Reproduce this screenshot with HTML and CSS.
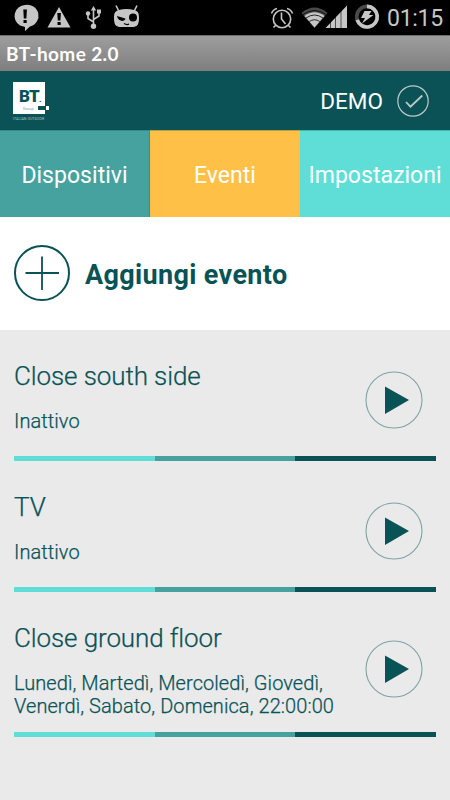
FILE: index.html
```
<!DOCTYPE html>
<html lang="it">
<head>
    <meta charset="UTF-8">
    <meta name="viewport" content="width=device-width, initial-scale=1.0">
    <title>BT-home 2.0</title>
    <link rel="stylesheet" href="styles.css">
</head>
<body>
    <div class="statusbar">
        <svg class="status-icons" width="150" height="35" viewBox="0 0 150 35">
            <path d="M25 5a11 11 0 0 0-5 20.500l5 1.500v4l5-4.500A11 11 0 0 0 25 5z" fill="#c6c6c6"/>
            <path d="M23.300 9.500h3.600l-.5 9h-2.600zM23.500 20h3.200v3h-3.200z" fill="#000"/>
            <path d="M59 7l11.500 20.500h-23z" fill="#c6c6c6"/>
            <path d="M57.300 13h3.600l-.5 7.500h-2.600zM57.500 22h3.200v3h-3.200z" fill="#000"/>
            <g fill="none" stroke="#c6c6c6" stroke-width="1.600">
                <path d="M93.500 9v16M93.500 22l-5.500-3.500V14M93.500 19.500l5.500-3.500v-4"/>
            </g>
            <path d="M93.500 6l2.700 4.500h-5.400zM97 9.500h4v4h-4z" fill="#c6c6c6"/>
            <circle cx="88" cy="13.500" r="2.200" fill="#c6c6c6"/>
            <circle cx="93.500" cy="26.300" r="2.700" fill="#c6c6c6"/>
            <path d="M116 5.500l3 6M137 5.500l-3 6" stroke="#c6c6c6" stroke-width="1.600"/>
            <path d="M119 10q7.500-2 15 0c4 1 5 3 5 8 0 7-2 9-7 9h-11c-5 0-7-2-7-9 0-5 1-7 5-8z" fill="#c6c6c6"/>
            <path d="M117 16l8.500 2.500c-1 4-7.500 3-8.500-2.500z" fill="#000"/>
            <circle cx="133" cy="17.500" r="4" fill="#000"/>
            <path d="M124 23.500q3 1.800 5 .5" fill="none" stroke="#000" stroke-width="1.200"/>
        </svg>
        <svg class="status-icons" width="112" height="35" viewBox="268 0 112 35">
            <g fill="none" stroke="#c6c6c6" stroke-width="1.600">
                <circle cx="282" cy="19" r="8.700"/>
                <path d="M281.500 12.500V19l4 5M275.500 25.500l-2 2M288.500 25.500l2 2M271.500 13.500q1.500-4 5.500-5M292.500 13.500q-1.500-4-5.500-5"/>
            </g>
            <path d="M301.500 13q13-11 26 0L314.500 28z" fill="#4a4a4a"/>
            <path d="M304.500 16q10-7.500 20 0l-10 11.500z" fill="#c6c6c6"/>
            <path d="M303 14.500q11.500-8 23 0M306 18q8.500-6 17 0M309.300 21.500q5.200-3.500 10.400 0" fill="none" stroke="#000" stroke-width=".8"/>
            <path d="M325.500 28L347 5.500V28z" fill="#c6c6c6"/>
            <path d="M330.500 20v8M335.500 16v12M341 10v18" stroke="#000" stroke-width=".6"/>
            <circle cx="367" cy="16.700" r="10.300" fill="none" stroke="#4a4a4a" stroke-width="3.600"/>
            <path d="M367 6.400a10.300 10.300 0 1 1-9.800 13.500" fill="none" stroke="#c6c6c6" stroke-width="3.600"/>
            <path d="M364.500 11h7l-2.500 4h4.500L362 23.500l3-5.500h-4z" fill="#c6c6c6"/>
        </svg>
        <span class="clock">01:15</span>
    </div>
    <div class="titlebar"><span class="app-title">BT-home 2.0</span></div>

    <header class="header">
        <div class="logo">
            <div class="logo-box">
                <span class="logo-name">BT<small>.</small></span>
                <span class="logo-group">Group</span>
                <span class="logo-flag"></span>
            </div>
            <span class="logo-tagline">ITALIAN OUTDOOR</span>
        </div>
        <div class="mode">
            <span class="mode-label">DEMO</span>
            <svg width="32" height="32" viewBox="0 0 32 32" fill="none" stroke="#bccaca">
                <circle cx="16" cy="16" r="15.200" stroke-width="1.200"/>
                <path d="M9 17l4.500 4.700L25.300 10.500" stroke-width="1.800"/>
            </svg>
        </div>
    </header>

    <nav class="tabs">
        <div class="tab devices"><span>Dispositivi</span></div>
        <div class="tab events"><span>Eventi</span></div>
        <div class="tab settings"><span>Impostazioni</span></div>
    </nav>

    <div class="add-event">
        <svg width="56" height="56" viewBox="0 0 56 56" fill="none" stroke="#095256">
            <circle cx="28" cy="28" r="27" stroke-width="2"/>
            <path d="M28 11.500v33.500M11.500 28H45" stroke-width="1.800"/>
        </svg>
        <span class="add-label">Aggiungi evento</span>
    </div>

    <main class="events-list">
        <div class="event">
            <div class="event-body">
                <div class="event-text">
                    <div class="event-name">Close south side</div>
                    <div class="event-info">Inattivo</div>
                </div>
                <svg class="play" width="58" height="58" viewBox="0 0 58 58">
                    <circle cx="29" cy="29" r="28" fill="none" stroke="#7fa3a5" stroke-width="1.100"/>
                    <path d="M20 15.500L44 29 20 43z" fill="#095256"/>
                </svg>
            </div>
            <div class="divider"></div>
        </div>
        <div class="event">
            <div class="event-body">
                <div class="event-text">
                    <div class="event-name">TV</div>
                    <div class="event-info">Inattivo</div>
                </div>
                <svg class="play" width="58" height="58" viewBox="0 0 58 58">
                    <circle cx="29" cy="29" r="28" fill="none" stroke="#7fa3a5" stroke-width="1.100"/>
                    <path d="M20 15.500L44 29 20 43z" fill="#095256"/>
                </svg>
            </div>
            <div class="divider"></div>
        </div>
        <div class="event tall">
            <div class="event-body">
                <div class="event-text">
                    <div class="event-name">Close ground floor</div>
                    <div class="event-info">Lunedì, Martedì, Mercoledì, Giovedì,<br>Venerdì, Sabato, Domenica, 22:00:00</div>
                </div>
                <svg class="play" width="58" height="58" viewBox="0 0 58 58">
                    <circle cx="29" cy="29" r="28" fill="none" stroke="#7fa3a5" stroke-width="1.100"/>
                    <path d="M20 15.500L44 29 20 43z" fill="#095256"/>
                </svg>
            </div>
            <div class="divider"></div>
        </div>
    </main>
</body>
</html>
```
FILE: styles.css
```
* {
    box-sizing: border-box;
}
body {
    margin: 0;
    height: 800px;
    display: flex;
    flex-direction: column;
    font-family: Roboto, "Liberation Sans", sans-serif;
    font-variant-ligatures: none;
    background-color: #eaeaea;
    color: #095256;
    overflow: hidden;
    white-space: nowrap;
}
svg {
    display: block;
    flex: none;
}
.statusbar {
    height: 35px;
    flex: none;
    display: flex;
    background-color: #000;
}
.status-icons:nth-child(2) {
    margin-left: 118px;
}
.clock {
    margin-left: 7px;
    color: #c6c6c6;
    font-size: 23px;
    line-height: 38px;
    letter-spacing: -0.3px;
}
.titlebar {
    height: 36px;
    flex: none;
    padding-left: 6px;
    background: linear-gradient(#9e9e9e, #7e7e7e);
    border-top: 1px solid #6b6b6b;
}
.app-title {
    color: #fff;
    font-family: Lato, sans-serif;
    font-size: 19px;
    font-weight: 700;
    line-height: 36px;
    letter-spacing: 0.4px;
}
.header {
    height: 59px;
    flex: none;
    display: flex;
    justify-content: space-between;
    padding: 11px 21px 0 13px;
    background-color: #0b5256;
}
.logo {
    width: 36px;
}
.logo-box {
    width: 32px;
    height: 32px;
    padding: 5px 0 0 6px;
    display: flex;
    flex-wrap: wrap;
    align-content: flex-start;
    background-color: #fff;
}
.logo-name {
    width: 26px;
    height: 19px;
    font-size: 17px;
    font-weight: 900;
    line-height: 18px;
    letter-spacing: -0.8px;
}
.logo-name small {
    font-size: 8px;
}
.logo-group {
    width: 19px;
    padding-left: 4px;
    font-size: 4px;
    line-height: 5px;
    color: #7fa3a5;
}
.logo-flag {
    width: 11px;
    height: 4px;
    margin: 0 -6px 0 0;
    background-color: #095256;
    border-right: 3px solid #fff;
}
.logo-tagline {
    display: block;
    margin-top: 3px;
    color: #a9c1c2;
    font-size: 3.700px;
    line-height: 4px;
}
.mode {
    display: flex;
    gap: 14px;
    padding-top: 3px;
}
.mode-label {
    color: #fff;
    font-size: 22.500px;
    line-height: 33px;
}
.tabs {
    height: 87px;
    flex: none;
    display: grid;
    grid-template-columns: repeat(3, 150px);
}
.tab {
    color: #fff;
    font-size: 23px;
    line-height: 89px;
    text-align: center;
    letter-spacing: 0.03px;
    border-top: 1px solid rgba(9, 82, 86, 0.3);
}
.devices {
    background-color: #46a29f;
    border-right: 1px solid #209a93;
}
.events {
    background-color: #ffc047;
}
.settings {
    background-color: #5eded6;
}
.add-event {
    height: 113px;
    flex: none;
    display: flex;
    align-items: center;
    gap: 15px;
    padding-left: 14px;
    background-color: #fff;
}
.add-event svg {
    margin-top: -1px;
}
.add-label {
    padding-top: 2px;
    font-size: 27px;
    font-weight: 700;
    letter-spacing: 0.35px;
}
.events-list {
    padding: 0 14px;
}
.event {
    height: 131px;
    display: flex;
    flex-direction: column;
}
.event.tall {
    height: 145px;
}
.event-body {
    flex: 1;
    display: flex;
    justify-content: space-between;
    padding-right: 13px;
}
.event-name {
    margin-top: 30px;
    font-size: 26px;
    font-weight: 300;
    line-height: 33px;
    letter-spacing: -0.1px;
    -webkit-text-stroke: 0.25px #095256;
}
.event-info {
    margin-top: 17px;
    font-size: 20px;
    font-weight: 300;
    line-height: 23px;
    letter-spacing: 0.07px;
    -webkit-text-stroke: 0.25px #095256;
}
.play {
    margin-top: 41px;
}
.tall .play {
    margin-top: 48px;
}
.divider {
    height: 5px;
    background: linear-gradient(to right, #5eded6 33.33%, #46a29f 33.33%, #46a29f 66.66%, #095256 66.66%);
}
```
